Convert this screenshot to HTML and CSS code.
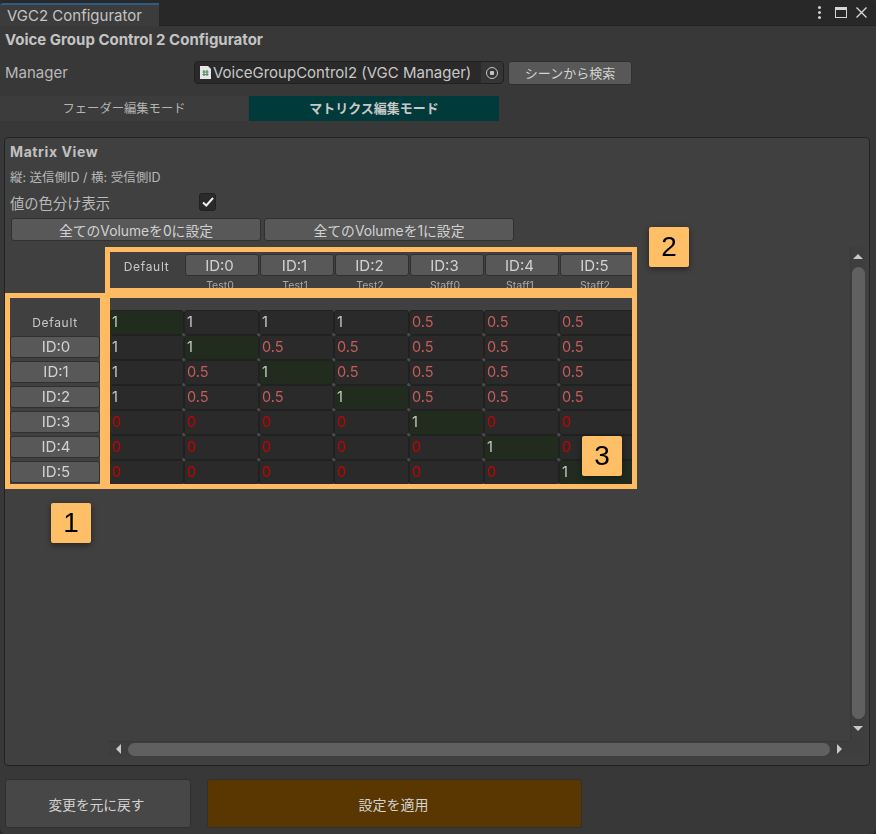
FILE: index.html
```html
<!DOCTYPE html>
<html lang="ja">
<head>
  <meta charset="UTF-8">
  <title>VGC2 Configurator</title>
  <link rel="stylesheet" href="styles.css">
</head>
<body>
  <div class="window">
    <div class="tabbar">
      <div class="tab">VGC2 Configurator</div>
      <div class="tab-icons">
        <span class="kebab"><i></i><i></i><i></i></span>
        <span class="maximize"></span>
        <svg class="close" width="11" height="11" viewBox="0 0 11 11"><path d="M0.5 0.5L10.5 10.5M10.5 0.5L0.5 10.5" stroke="#d6d6d6" stroke-width="1.4" fill="none"/></svg>
      </div>
    </div>

    <div class="title">Voice Group Control 2 Configurator</div>

    <div class="manager">
      <span class="manager-label">Manager</span>
      <div class="object-field">
        <svg class="file-icon" width="11" height="13" viewBox="0 0 11 13"><path d="M0 0H8L11 3V13H0Z" fill="#e6e6e6"/><path d="M4 4V10M7 4V10M2.5 6H8.5M2.5 8.500H8.500" stroke="#4f8a58" stroke-width="1.200"/></svg>
        <span class="object-name">VoiceGroupControl2 (VGC Manager)</span>
        <span class="picker"><i></i></span>
      </div>
      <div class="btn find-btn">シーンから検索</div>
    </div>

    <div class="modes">
      <div class="mode">フェーダー編集モード</div>
      <div class="mode mode-active">マトリクス編集モード</div>
    </div>

    <div class="panel">
      <div class="panel-title">Matrix View</div>
      <div class="panel-note">縦: 送信側ID / 横: 受信側ID</div>
      <div class="toggle-row">
        <span class="toggle-label">値の色分け表示</span>
        <span class="checkbox"><svg width="12" height="10" viewBox="0 0 12 10"><path d="M1 5.500L4.300 8.500L11 1" stroke="#f0f0f0" stroke-width="2" fill="none"/></svg></span>
      </div>
      <div class="set-all">
        <div class="btn set-btn">全てのVolumeを0に設定</div>
        <div class="btn set-btn">全てのVolumeを1に設定</div>
      </div>

      <div class="scroll-view">
        <div class="scroll-body">
          <div class="matrix">
            <div class="corner"></div>
            <div class="col-head col-default"><span>Default</span></div>
            <div class="col-head"><div class="btn id-btn">ID:0</div><span class="col-name">Test0</span></div>
            <div class="col-head"><div class="btn id-btn">ID:1</div><span class="col-name">Test1</span></div>
            <div class="col-head"><div class="btn id-btn">ID:2</div><span class="col-name">Test2</span></div>
            <div class="col-head"><div class="btn id-btn">ID:3</div><span class="col-name">Staff0</span></div>
            <div class="col-head"><div class="btn id-btn">ID:4</div><span class="col-name">Staff1</span></div>
            <div class="col-head"><div class="btn id-btn">ID:5</div><span class="col-name">Staff2</span></div>

            <div class="row-head row-default">Default</div>
            <div class="cell one self">1</div><div class="cell one">1</div><div class="cell one">1</div><div class="cell one">1</div><div class="cell half">0.5</div><div class="cell half">0.5</div><div class="cell half">0.5</div>

            <div class="row-head"><div class="btn row-btn">ID:0</div></div>
            <div class="cell one">1</div><div class="cell one self">1</div><div class="cell half">0.5</div><div class="cell half">0.5</div><div class="cell half">0.5</div><div class="cell half">0.5</div><div class="cell half">0.5</div>

            <div class="row-head"><div class="btn row-btn">ID:1</div></div>
            <div class="cell one">1</div><div class="cell half">0.5</div><div class="cell one self">1</div><div class="cell half">0.5</div><div class="cell half">0.5</div><div class="cell half">0.5</div><div class="cell half">0.5</div>

            <div class="row-head"><div class="btn row-btn">ID:2</div></div>
            <div class="cell one">1</div><div class="cell half">0.5</div><div class="cell half">0.5</div><div class="cell one self">1</div><div class="cell half">0.5</div><div class="cell half">0.5</div><div class="cell half">0.5</div>

            <div class="row-head"><div class="btn row-btn">ID:3</div></div>
            <div class="cell zero">0</div><div class="cell zero">0</div><div class="cell zero">0</div><div class="cell zero">0</div><div class="cell one self">1</div><div class="cell zero">0</div><div class="cell zero">0</div>

            <div class="row-head"><div class="btn row-btn">ID:4</div></div>
            <div class="cell zero">0</div><div class="cell zero">0</div><div class="cell zero">0</div><div class="cell zero">0</div><div class="cell zero">0</div><div class="cell one self">1</div><div class="cell zero">0</div>

            <div class="row-head"><div class="btn row-btn">ID:5</div></div>
            <div class="cell zero">0</div><div class="cell zero">0</div><div class="cell zero">0</div><div class="cell zero">0</div><div class="cell zero">0</div><div class="cell zero">0</div><div class="cell one self">1</div>
          </div>
        </div>

        <div class="vbar">
          <span class="arrow arrow-up"></span>
          <span class="vthumb"></span>
          <span class="arrow arrow-down"></span>
        </div>
        <div class="hbar">
          <span class="arrow arrow-left"></span>
          <span class="hthumb"></span>
          <span class="arrow arrow-right"></span>
        </div>
        <div class="bar-corner"></div>
      </div>
    </div>

    <div class="actions">
      <div class="btn action-revert">変更を元に戻す</div>
      <div class="btn action-apply">設定を適用</div>
    </div>

    <!-- annotations drawn over the screenshot -->
    <div class="mark mark-rows"></div>
    <div class="mark mark-cols"></div>
    <div class="mark mark-cells"></div>
    <div class="badge badge-1">1</div>
    <div class="badge badge-2">2</div>
    <div class="badge badge-3">3</div>
  </div>
</body>
</html>
```

FILE: styles.css
```css
* {
  box-sizing: border-box;
}

html, body {
  margin: 0;
  padding: 0;
  background: #2b2b2b;
}

body {
  font-family: Inter, "Noto Sans CJK JP", sans-serif;
  font-size: 14px;
  color: #c8c8c8;
}

.window {
  position: relative;
  width: 876px;
  height: 834px;
  background: #383838;
  border-radius: 6px;
  overflow: hidden;
}

/* title bar */
.tabbar {
  display: flex;
  justify-content: space-between;
  height: 26px;
  background: #282828;
  border-bottom: 1px solid #232323;
}

.tab {
  width: 159px;
  height: 23px;
  margin-top: 3px;
  padding-left: 7px;
  background: #3c3c3c;
  border-top: 2px solid #2c5d87;
  border-top-left-radius: 3px;
  font-size: 15px;
  line-height: 21px;
  color: #c4c4c4;
}

.tab-icons {
  display: flex;
  align-items: center;
  padding-right: 9px;
}

.kebab {
  display: flex;
  flex-direction: column;
  gap: 2px;
  margin-right: 14px;
}

.kebab i {
  display: block;
  width: 3px;
  height: 3px;
  background: #cfcfcf;
  border-radius: 50%;
}

.maximize {
  width: 12px;
  height: 11px;
  margin-right: 9px;
  border: 1px solid #d6d6d6;
  border-top-width: 3px;
}

.title {
  height: 27px;
  padding-left: 5px;
  font-size: 15px;
  font-weight: 700;
  line-height: 28px;
  color: #c4c4c4;
}

/* manager row */
.manager {
  display: flex;
  align-items: center;
  height: 25px;
  margin-top: 7px;
  padding-left: 5px;
}

.manager-label {
  width: 189px;
  font-size: 15px;
  color: #b8b8b8;
}

.object-field {
  display: flex;
  align-items: center;
  width: 310px;
  height: 23px;
  padding-left: 5px;
  background: #2a2a2a;
  border: 1px solid #212121;
  border-radius: 4px;
  font-size: 15px;
  white-space: nowrap;
  color: #c8c8c8;
}

.file-icon {
  flex: none;
  margin-right: 2px;
}

.object-name {
  flex: 1;
}

.picker {
  display: flex;
  align-items: center;
  justify-content: center;
  width: 22px;
  height: 21px;
  background: #353535;
  border-radius: 0 3px 3px 0;
}

.picker i {
  display: block;
  width: 12px;
  height: 12px;
  border: 1.500px solid #c4c4c4;
  border-radius: 50%;
  background: radial-gradient(circle, #c4c4c4 0 2px, transparent 2.500px);
}

.btn {
  display: flex;
  align-items: center;
  justify-content: center;
  background: #585858;
  border: 1px solid #303030;
  border-radius: 3px;
  white-space: nowrap;
  color: #d2d2d2;
}

.find-btn {
  width: 124px;
  height: 24px;
  margin-left: 4px;
  font-size: 13px;
}

/* mode tabs */
.modes {
  display: flex;
  height: 25px;
  margin-top: 11px;
}

.mode {
  width: 248px;
  background: #3c3c3c;
  font-size: 12.300px;
  line-height: 25px;
  text-align: center;
  color: #b4b4b4;
}

.mode-active {
  width: 250px;
  margin-left: 1px;
  background: #003a3a;
  font-size: 13px;
  font-weight: 700;
  color: #c8c8c8;
}

/* matrix panel */
.panel {
  display: flex;
  flex-direction: column;
  width: 866px;
  height: 629px;
  margin: 16px 0 0 4px;
  background: #404040;
  border: 1px solid #232323;
  border-radius: 4px;
}

.panel-title {
  height: 28px;
  padding-left: 5px;
  font-size: 14px;
  font-weight: 700;
  line-height: 28px;
  letter-spacing: 0.6px;
  color: #c0c0c0;
}

.panel-note {
  height: 23px;
  padding-left: 5px;
  font-size: 12.500px;
  line-height: 23px;
  color: #b8b8b8;
}

.toggle-row {
  display: flex;
  align-items: center;
  height: 26px;
  padding-left: 5px;
}

.toggle-label {
  width: 189px;
  font-size: 14.300px;
  color: #b8b8b8;
}

.checkbox {
  display: flex;
  align-items: center;
  justify-content: center;
  width: 17px;
  height: 18px;
  background: #2a2a2a;
  border: 1px solid #212121;
  border-radius: 3px;
}

.set-all {
  display: flex;
  gap: 3px;
  height: 23px;
  margin-top: 3px;
  padding-left: 6px;
}

.set-btn {
  width: 250px;
  font-size: 13.800px;
}

/* scroll view */
.scroll-view {
  display: grid;
  grid-template-columns: 845px 15px;
  grid-template-rows: 494px 15px;
  margin-top: 6px;
}

.scroll-body {
  overflow: hidden;
  padding: 7px 0 0 5px;
}

/* own layer keeps the small text grayscale */
.matrix {
  display: grid;
  grid-template-columns: 99px repeat(7, 75px);
  grid-template-rows: 56px repeat(7, 25px);
  will-change: transform;
}

.col-head {
  display: flex;
  flex-direction: column;
  align-items: center;
  white-space: nowrap;
}

.col-default {
  height: 25px;
  justify-content: center;
  font-size: 12px;
  letter-spacing: 0.7px;
  color: #c8c8c8;
}

.id-btn {
  width: 74px;
  height: 22px;
  margin-left: 1px;
  padding-right: 5px;
  font-size: 15px;
}

.col-name {
  margin-top: 3px;
  margin-right: 3px;
  font-size: 10.500px;
  line-height: 14px;
  color: #a8a8a8;
}

.row-head {
  padding-top: 1px;
}

.row-default {
  height: 25px;
  padding: 5px 0 0 0;
  width: 90px;
  font-size: 12px;
  line-height: 16px;
  letter-spacing: 0.7px;
  text-align: center;
  color: #c8c8c8;
}

.row-btn {
  width: 90px;
  height: 22px;
  padding: 0 0 2px 2px;
  font-size: 15px;
}

.cell {
  position: relative;
  height: 25px;
  padding-left: 2px;
  background: #2a2a2a;
  border: 1px solid #212121;
  border-radius: 3px;
  font-size: 14.500px;
  line-height: 22px;
}

.cell::after {
  content: "";
  position: absolute;
  right: -2px;
  bottom: -2px;
  width: 3px;
  height: 3px;
  background: #4c4c4c;
  border-radius: 50%;
}

.self {
  background: #212c1f;
}

.one {
  color: #c8c8c8;
}

.half {
  color: #c45c5c;
}

.zero {
  color: #c80000;
}

/* scrollbars */
.vbar {
  display: flex;
  flex-direction: column;
  align-items: center;
  background: #3e3e3e;
  border-left: 1px solid #383838;
}

.hbar {
  display: flex;
  align-items: center;
  margin-left: 104px;
  background: #3e3e3e;
  border-top: 1px solid #383838;
}

.vthumb {
  width: 13px;
  height: 452px;
  margin: 8px 0 7px;
  background: #606060;
  border-radius: 7px;
}

.hthumb {
  width: 702px;
  height: 13px;
  margin: 0 7px;
  background: #606060;
  border-radius: 7px;
}

.bar-corner {
  background: #3e3e3e;
}

.arrow {
  width: 0;
  height: 0;
  border-style: solid;
  border-color: transparent;
}

.arrow-up {
  margin-top: 7px;
  border-width: 0 5px 5px;
  border-bottom-color: #c8c8c8;
}

.arrow-down {
  border-width: 5px 5px 0;
  border-top-color: #c8c8c8;
}

.arrow-left {
  margin-left: 7px;
  border-width: 5px 5px 5px 0;
  border-right-color: #c8c8c8;
}

.arrow-right {
  border-width: 5px 0 5px 5px;
  border-left-color: #c8c8c8;
}

/* bottom buttons */
.actions {
  display: flex;
  gap: 16px;
  height: 49px;
  margin-top: 13px;
  padding-left: 5px;
}

.action-revert {
  width: 186px;
  padding-right: 3px;
  background: #474747;
  font-size: 13.700px;
}

.action-apply {
  width: 375px;
  padding-right: 2px;
  background: #5a3700;
  font-size: 14px;
}

/* annotation overlays */
.mark {
  position: absolute;
  border: 5px solid #ffbb63;
}

.mark-rows {
  left: 5px;
  top: 293px;
  width: 100px;
  height: 196px;
}

.mark-cols {
  left: 105px;
  top: 247px;
  width: 532px;
  height: 46px;
}

.mark-cells {
  left: 105px;
  top: 293px;
  width: 532px;
  height: 196px;
}

.badge {
  position: absolute;
  width: 40px;
  height: 40px;
  background: #ffbf66;
  border-radius: 2px;
  box-shadow: 0 2px 6px rgba(0, 0, 0, 0.45);
  font-family: "Liberation Sans", sans-serif;
  font-size: 28px;
  line-height: 40px;
  text-align: center;
  color: #000;
}

.badge-1 {
  left: 51px;
  top: 503px;
}

.badge-2 {
  left: 649px;
  top: 227px;
}

.badge-3 {
  left: 582px;
  top: 436px;
}
```
